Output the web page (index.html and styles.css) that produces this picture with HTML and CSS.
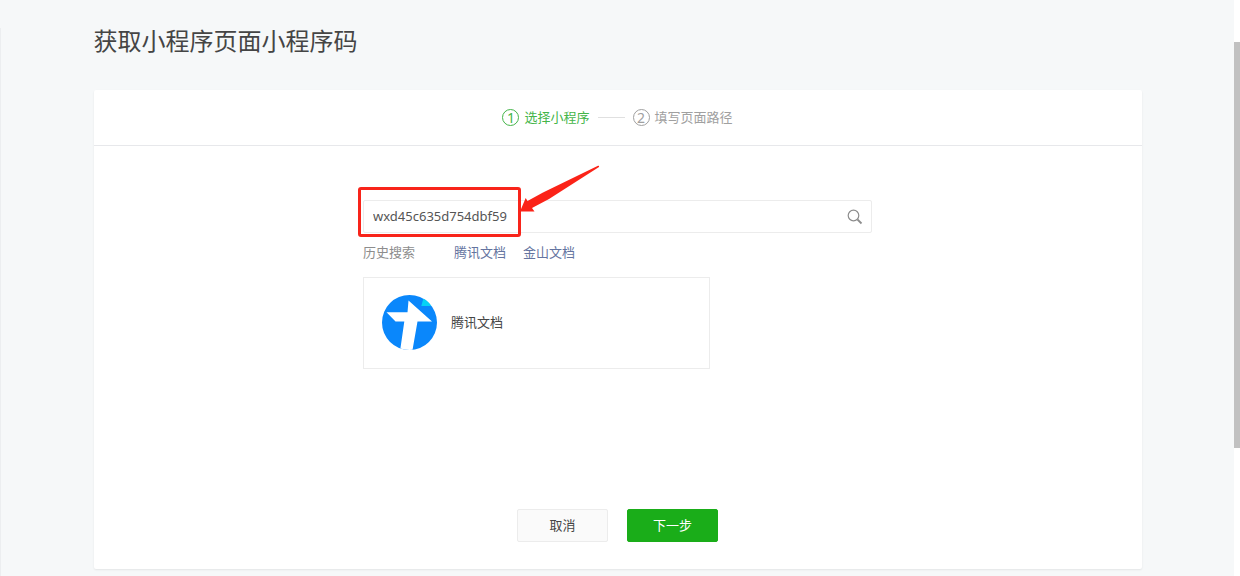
FILE: index.html
```html
<!DOCTYPE html>
<html lang="zh-CN">
<head>
    <meta charset="UTF-8">
    <meta name="viewport" content="width=device-width, initial-scale=1.0">
    <title>获取小程序页面小程序码</title>
    <link rel="stylesheet" href="styles.css">
</head>
<body>
    <main class="page">
        <div class="container">
            <h1>获取小程序页面小程序码</h1>

            <section class="panel">
                <!-- 步骤 -->
                <ol class="steps">
                    <li class="step active"><span class="num">1</span>选择小程序</li>
                    <li class="step"><span class="num">2</span>填写页面路径</li>
                </ol>

                <form class="search-form">
                    <div class="search-box">
                        <input type="text" id="keyword" aria-label="搜索小程序" value="wxd45c635d754dbf59">
                        <button type="button" class="search-btn" aria-label="搜索">
                            <svg width="16" height="16" viewBox="0 0 16 16" fill="none" stroke="#8d8d8d">
                                <circle cx="6.5" cy="6.5" r="5.3" stroke-width="1.2"/>
                                <path d="M10.5 10.5L14.5 14.5" stroke-width="1.8"/>
                            </svg>
                        </button>
                        <!-- 标注 -->
                        <div class="mark"></div>
                        <svg class="arrow" width="80" height="48" viewBox="0 0 80 48">
                            <path fill="#fb2318" d="M0 46.500L5.700 33L7.500 36L23 27.500L78 .8Q79.500 .5 79 2L29 34L12 43L14.500 46.500Z"/>
                        </svg>
                    </div>

                    <div class="history">
                        <span class="history-title">历史搜索</span>
                        <a href="#">腾讯文档</a>
                        <a href="#">金山文档</a>
                    </div>

                    <div class="result">
                        <svg class="logo" width="55" height="55" viewBox="0 0 55 55">
                            <clipPath id="round"><circle cx="27.5" cy="27.5" r="27.5"/></clipPath>
                            <g clip-path="url(#round)">
                                <rect width="55" height="55" fill="#0a87fb"/>
                                <path fill="#05d3f5" d="M41.500 3L39.300 11H49V3Z"/>
                                <path fill="#fff" d="M26.500 5.500L50 26.500H35.500L30.500 55H18.200L22.300 26.500H13.500L4.500 17.300H25.500Z"/>
                            </g>
                        </svg>
                        <span>腾讯文档</span>
                    </div>

                    <div class="actions">
                        <button type="button" class="btn">取消</button>
                        <button type="submit" class="btn btn-primary">下一步</button>
                    </div>
                </form>
            </section>
        </div>
    </main>
    <div class="scrollbar"><div class="thumb"></div></div>
</body>
</html>
```
FILE: styles.css
```css
* {
    box-sizing: border-box;
}

body {
    margin: 0;
    display: flex;
    min-height: 100vh;
    background: #f6f8f9;
    color: #454545;
    font: 13px/20px "Noto Sans", "Noto Sans CJK SC", sans-serif;
}

.page {
    flex: 1;
    margin-top: 28px;
    border-left: 1px solid #eceef0;
}

.container {
    max-width: 1048px;
    margin: 0 auto;
}

h1 {
    margin: 0 0 36px;
    font-size: 24px;
    line-height: 26px;
    font-weight: 400;
}

.panel {
    background: #fff;
    border-radius: 2px;
    box-shadow: 0 1px 2px rgba(0, 0, 0, 0.08);
}

/* 步骤条 */
.steps {
    display: flex;
    justify-content: center;
    margin: 0;
    padding: 17px 0 18px;
    list-style: none;
    border-bottom: 1px solid #e7e8eb;
}

.step {
    display: flex;
    align-items: center;
    color: #a0a0a0;
}

.step.active {
    color: #44b549;
}

.step + .step::before {
    content: "";
    width: 27px;
    margin: 0 8px;
    border-top: 1px solid #e0e0e0;
}

.num {
    width: 17px;
    height: 17px;
    margin-right: 5px;
    border: 1px solid;
    border-radius: 50%;
    font-size: 14px;
    line-height: 15px;
    text-align: center;
}

/* 搜索 */
.search-form {
    max-width: 509px;
    margin: 0 auto;
    padding: 54px 0 27px;
}

.search-box {
    position: relative;
    display: flex;
    height: 33px;
    border: 1px solid #ececec;
    border-radius: 2px;
}

.search-box input {
    flex: 1;
    padding: 0 9px 1px;
    border: 0;
    outline: 0;
    background: none;
    color: #555;
    font: inherit;
}

.search-btn {
    display: flex;
    align-items: center;
    padding: 0 8px;
    border: 0;
    background: none;
}

.mark {
    position: absolute;
    top: -14px;
    left: -6px;
    width: 163px;
    height: 50px;
    border: 3px solid #f8241a;
    border-radius: 3px;
}

.arrow {
    position: absolute;
    top: -36px;
    left: 156px;
}

.history {
    display: flex;
    gap: 17px;
    margin: 9px 0 15px;
}

.history-title {
    margin-right: 22px;
    color: #8d8d8d;
}

.history a {
    color: #6474a0;
    text-decoration: none;
}

.result {
    display: flex;
    align-items: center;
    gap: 14px;
    max-width: 347px;
    height: 92px;
    padding: 0 18px 2px;
    border: 1px solid #ececec;
}

/* 按钮 */
.actions {
    display: flex;
    justify-content: center;
    gap: 19px;
    margin-top: 140px;
}

.btn {
    width: 91px;
    height: 33px;
    padding: 0 0 2px;
    border: 1px solid #ececec;
    border-radius: 2px;
    background: #fafafa;
    color: #454545;
    font: inherit;
}

.btn-primary {
    border-color: #1aad19;
    background: #1aad19;
    color: #fff;
}

.scrollbar {
    width: 6px;
    padding-top: 42px;
    background: #fff;
}

.thumb {
    height: 406px;
    background: #c1c1c1;
}
```
